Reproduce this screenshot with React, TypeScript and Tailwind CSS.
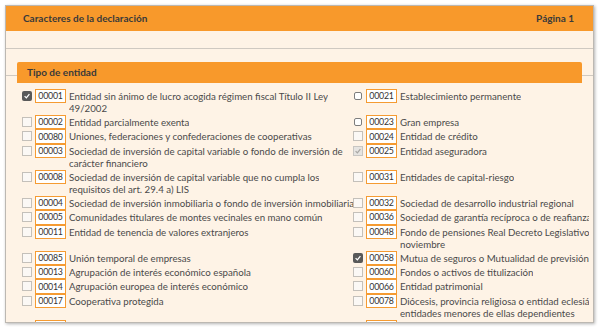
import React from 'react'

type Check = 'checked' | 'round' | 'box' | 'disabled'

interface Entry {
  code: string
  lines: string[]
  cb?: Check
}

const rows: [Entry, Entry][] = [
  [
    { code: '00001', lines: ['Entidad sin ánimo de lucro acogida régimen fiscal Título II Ley', '49/2002'], cb: 'checked' },
    { code: '00021', lines: ['Establecimiento permanente'], cb: 'round' },
  ],
  [
    { code: '00002', lines: ['Entidad parcialmente exenta'] },
    { code: '00023', lines: ['Gran empresa'], cb: 'round' },
  ],
  [
    { code: '00080', lines: ['Uniones, federaciones y confederaciones de cooperativas'] },
    { code: '00024', lines: ['Entidad de crédito'] },
  ],
  [
    { code: '00003', lines: ['Sociedad de inversión de capital variable o fondo de inversión de', 'carácter financiero'] },
    { code: '00025', lines: ['Entidad aseguradora'], cb: 'disabled' },
  ],
  [
    { code: '00008', lines: ['Sociedad de inversión de capital variable que no cumpla los', 'requisitos del art. 29.4 a) LIS'] },
    { code: '00031', lines: ['Entidades de capital-riesgo'] },
  ],
  [
    { code: '00004', lines: ['Sociedad de inversión inmobiliaria o fondo de inversión inmobiliaria'] },
    { code: '00032', lines: ['Sociedad de desarrollo industrial regional'] },
  ],
  [
    { code: '00005', lines: ['Comunidades titulares de montes vecinales en mano común'] },
    { code: '00036', lines: ['Sociedad de garantía recíproca o de reafianzamiento'] },
  ],
  [
    { code: '00011', lines: ['Entidad de tenencia de valores extranjeros'] },
    { code: '00048', lines: ['Fondo de pensiones Real Decreto Legislativo 1/2002, de 29 de', 'noviembre'] },
  ],
  [
    { code: '00085', lines: ['Unión temporal de empresas'] },
    { code: '00058', lines: ['Mutua de seguros o Mutualidad de previsión social'], cb: 'checked' },
  ],
  [
    { code: '00013', lines: ['Agrupación de interés económico española'] },
    { code: '00060', lines: ['Fondos o activos de titulización'] },
  ],
  [
    { code: '00014', lines: ['Agrupación europea de interés económico'] },
    { code: '00066', lines: ['Entidad patrimonial'] },
  ],
  [
    { code: '00017', lines: ['Cooperativa protegida'] },
    { code: '00078', lines: ['Diócesis, provincia religiosa o entidad eclesiástica y sus', 'entidades menores de ellas dependientes'] },
  ],
  [
    { code: '00018', lines: ['Cooperativa especialmente protegida'] },
    { code: '00079', lines: ['Fondo de activos bancarios'] },
  ],
]

const Tick = ({ color }: { color: string }) => (
  <svg viewBox="0 0 10 10" className="w-[8px] h-[8px]">
    <path d="M2 5.2 L4.2 7.3 L8 2.6" fill="none" stroke={color} strokeWidth="1.6" />
  </svg>
)

const CheckBox = ({ kind = 'box' }: { kind?: Check }) => {
  if (kind === 'checked') {
    return (
      <div className="mt-[2px] w-[10px] h-[10px] rounded-[2px] bg-[#595959] flex items-center justify-center shrink-0">
        <Tick color="#ffffff" />
      </div>
    )
  }
  if (kind === 'disabled') {
    return (
      <div className="mt-[2px] w-[10px] h-[10px] border border-[#c8c6c2] bg-[#e6e4e1] flex items-center justify-center shrink-0">
        <Tick color="#a9a7a4" />
      </div>
    )
  }
  if (kind === 'round') {
    return <div className="mt-[3px] ml-[1px] mr-[1px] w-[8px] h-[8px] rounded-[2px] border border-[#7d7d7d] bg-white shrink-0" />
  }
  return <div className="mt-[2px] w-[10px] h-[10px] border border-[#c4c0ba] bg-[#fbf8f5] shrink-0" />
}

const Item = ({ entry }: { entry: Entry }) => (
  <div className="flex items-start min-w-0">
    <CheckBox kind={entry.cb} />
    <div className="ml-[3px] w-[31px] h-[14.4px] border border-[#f59b32] bg-white text-[8.8px] tracking-[-0.2px] leading-[12px] text-[#333] flex items-center justify-center shrink-0">
      {entry.code}
    </div>
    <div className="ml-[3px] pt-[1px] pb-[1px] min-w-0 overflow-hidden text-[9.7px] leading-[12px] text-[#4a4a4a]">
      {entry.lines.map((line, i) => (
        <div key={i} className="whitespace-nowrap">
          {line}
        </div>
      ))}
    </div>
  </div>
)

export default function App() {
  return (
    <div className="w-[600px] h-[327px] bg-white overflow-hidden p-[5px] font-['Lato',sans-serif]">
      <div className="w-[589px] h-[318px] overflow-hidden border border-[#bcb8b2] bg-[#fef3e6] shadow-[1px_1px_3px_rgba(0,0,0,0.3)]">
        {/* Cabecera */}
        <div className="h-[25px] bg-[#f8992b] flex items-center justify-between pl-[17px] pr-[19px] text-[10px] font-bold text-[#3a3a3a]">
          <span>Caracteres de la declaración</span>
          <span>Página 1</span>
        </div>
        <div className="h-[18px] border-b border-[#cfc9c1]" />

        {/* Tipo de entidad */}
        <div className="mt-[26px] border-t border-[#cfc9c1]">
          <div className="-mt-[14px] mx-[11px] h-[21px] bg-[#f8992b] rounded-t-[2px] flex items-center pl-[10px] text-[10px] font-bold text-[#3a3a3a]">
            Tipo de entidad
          </div>
          <div className="mr-[4px] pl-[16px] pt-[6px] overflow-hidden grid grid-cols-[331px_1fr]">
            {rows.map(([left, right]) => (
              <React.Fragment key={left.code}>
                <Item entry={left} />
                <Item entry={right} />
              </React.Fragment>
            ))}
          </div>
        </div>
      </div>
    </div>
  )
}
